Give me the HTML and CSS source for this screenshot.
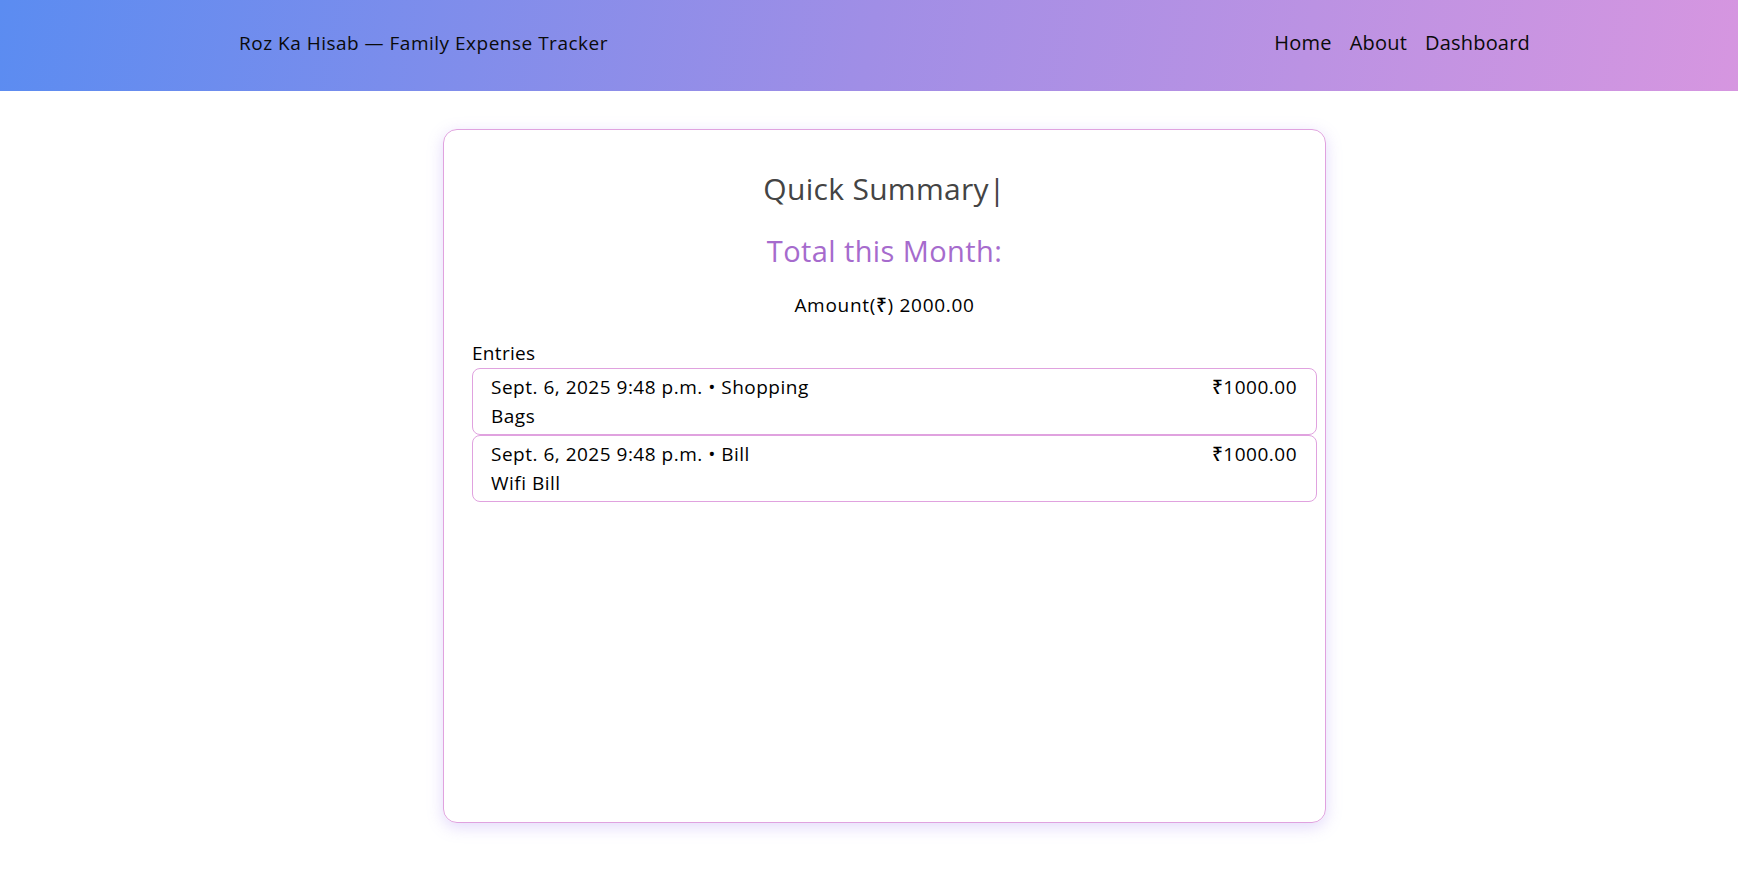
FILE: index.html
```html
<!DOCTYPE html>
<html lang="en">
<head>
<meta charset="utf-8">
<title>Roz Ka Hisab</title>
<link rel="stylesheet" href="styles.css">
</head>
<body>
<header class="topbar">
  <div class="brand">Roz Ka Hisab — Family Expense Tracker</div>
  <nav class="nav">
    <a href="#">Home</a>
    <a href="#">About</a>
    <a href="#">Dashboard</a>
  </nav>
</header>
<main class="page">
  <section class="card">
    <h2 class="summary-title">Quick Summary|</h2>
    <h3 class="month-title">Total this Month:</h3>
    <p class="amount">Amount(₹) 2000.00</p>
    <div class="entries-label">Entries</div>
    <ul class="entries">
      <li class="entry">
        <div class="entry-main">
          <div class="entry-meta">Sept. 6, 2025 9:48 p.m. • Shopping</div>
          <div class="entry-note">Bags</div>
        </div>
        <div class="entry-amt">₹1000.00</div>
      </li>
      <li class="entry">
        <div class="entry-main">
          <div class="entry-meta">Sept. 6, 2025 9:48 p.m. • Bill</div>
          <div class="entry-note">Wifi Bill</div>
        </div>
        <div class="entry-amt">₹1000.00</div>
      </li>
    </ul>
  </section>
</main>
</body>
</html>
```
FILE: styles.css
```css
* { box-sizing: border-box; }
html, body { margin: 0; padding: 0; }
body {
  font-family: "Open Sans", "Noto Sans", sans-serif;
  color: #000;
  background: #fff;
}
.topbar {
  height: 91px;
  display: flex;
  align-items: center;
  justify-content: space-between;
  padding: 0 208px 0 239px;
  background: linear-gradient(100deg, #5b8cf1 0%, #a08ee6 50%, #d696e0 100%);
}
.brand {
  font-size: 19px;
  letter-spacing: 0.5px;
  color: #0a0a0a;
  margin-top: -6px;
}
.nav {
  display: flex;
  gap: 18px;
  margin-top: -6px;
}
.nav a {
  color: #0a0a0a;
  text-decoration: none;
  font-size: 20px;
  letter-spacing: 0.2px;
}
.page {
  padding: 38px 0 40px 443px;
}
.card {
  width: 883px;
  height: 694px;
  border: 1px solid #e0a2df;
  border-radius: 14px;
  box-shadow: 0 4px 16px rgba(150, 120, 240, 0.28);
  padding: 36px 8px 20px 28px;
}
.summary-title {
  margin: 0 20px 0 0;
  text-align: center;
  font-weight: 400;
  font-size: 30px;
  letter-spacing: 0.3px;
  line-height: 46px;
  color: #444;
}
.month-title {
  margin: 19px 20px 0 0;
  text-align: center;
  font-weight: 500;
  font-size: 29px;
  letter-spacing: 0.4px;
  line-height: 40px;
  color: #a66bcd;
}
.amount {
  margin: 20px 20px 0 0;
  text-align: center;
  font-size: 19px;
  letter-spacing: 0.7px;
  line-height: 28px;
  font-weight: 500;
}
.entries-label {
  margin-top: 20px;
  font-size: 19px;
  letter-spacing: 0.3px;
  line-height: 28px;
  font-weight: 500;
}
.entries {
  list-style: none;
  margin: 1px 0 0 0;
  padding: 0;
}
.entry {
  display: flex;
  justify-content: space-between;
  align-items: flex-start;
  height: 67px;
  border: 1px solid #e0a2df;
  border-radius: 8px;
  padding: 4px 19px 0 18px;
  font-size: 19px;
  letter-spacing: 0.5px;
  font-weight: 500;
  line-height: 29px;
}
```
